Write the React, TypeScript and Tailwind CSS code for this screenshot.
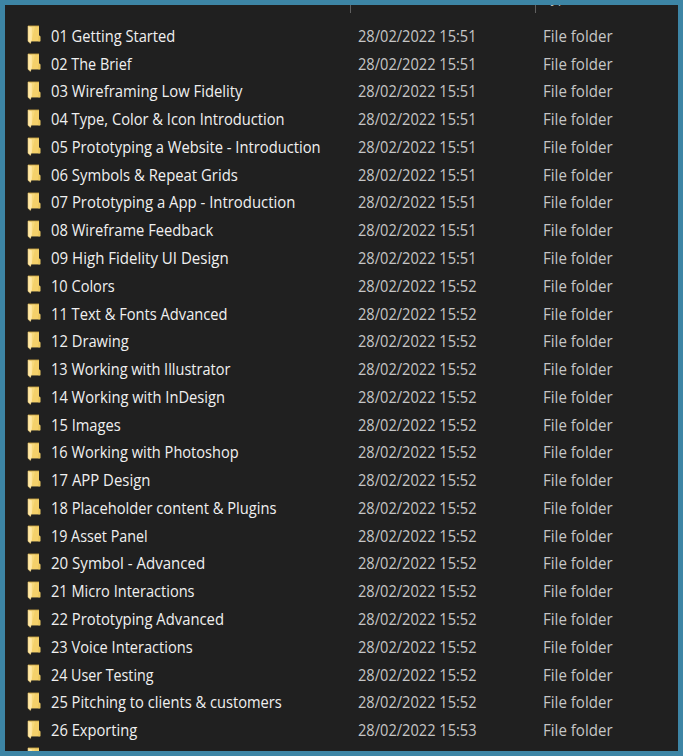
import { useLayoutEffect, useRef } from "react";

type Folder = { name: string; width: number; time: string };

const folders: Folder[] = [
  { name: "01 Getting Started", width: 124, time: "15:51" },
  { name: "02 The Brief", width: 81, time: "15:51" },
  { name: "03 Wireframing Low Fidelity", width: 191.5, time: "15:51" },
  { name: "04 Type, Color & Icon Introduction", width: 234, time: "15:51" },
  { name: "05 Prototyping a Website - Introduction", width: 270, time: "15:51" },
  { name: "06 Symbols & Repeat Grids", width: 187, time: "15:51" },
  { name: "07 Prototyping a App - Introduction", width: 244, time: "15:51" },
  { name: "08 Wireframe Feedback", width: 162.5, time: "15:51" },
  { name: "09 High Fidelity UI Design", width: 177.5, time: "15:51" },
  { name: "10 Colors", width: 64, time: "15:52" },
  { name: "11 Text & Fonts Advanced", width: 177, time: "15:52" },
  { name: "12 Drawing", width: 78, time: "15:52" },
  { name: "13 Working with Illustrator", width: 179, time: "15:52" },
  { name: "14 Working with InDesign", width: 174.3, time: "15:52" },
  { name: "15 Images", width: 70.2, time: "15:52" },
  { name: "16 Working with Photoshop", width: 187.3, time: "15:52" },
  { name: "17 APP Design", width: 99, time: "15:52" },
  { name: "18 Placeholder content & Plugins", width: 225.7, time: "15:52" },
  { name: "19 Asset Panel", width: 97, time: "15:52" },
  { name: "20 Symbol - Advanced", width: 154.3, time: "15:52" },
  { name: "21 Micro Interactions", width: 143.7, time: "15:52" },
  { name: "22 Prototyping Advanced", width: 173, time: "15:52" },
  { name: "23 Voice Interactions", width: 141.2, time: "15:52" },
  { name: "24 User Testing", width: 103, time: "15:52" },
  { name: "25 Pitching to clients & customers", width: 231, time: "15:52" },
  { name: "26 Exporting", width: 86.3, time: "15:53" },
];

// Condenses the label so that it fills exactly the given width.
function Fit({ text, width }: { text: string; width: number }) {
  const ref = useRef<HTMLSpanElement>(null);
  useLayoutEffect(() => {
    const fit = () => {
      const el = ref.current;
      if (!el) return;
      el.style.transform = `scaleX(${width / el.offsetWidth})`;
    };
    fit();
    document.fonts.ready.then(fit);
  }, [text, width]);
  return (
    <span ref={ref} className="inline-block origin-left whitespace-pre">
      {text}
    </span>
  );
}

function FolderIcon() {
  return (
    <svg width="14" height="20" viewBox="0 0 14 20" className="block shrink-0">
      <path d="M1 1H12V10.5L13.2 11.3V16.3H1Z" fill="#f8da7c" />
      <path d="M8 1H12V10.5L13.2 11.3V16.3H4.5Z" fill="#f4d06a" />
      <path d="M1 .9H12" stroke="#b9963f" strokeWidth=".8" />
      <path d="M11.6 10.8L13.2 11.5V16.3H11.2V12Z" fill="#ecc75c" />
      <path d="M1 1.3L4.8 2.6V14.6L3.7 18.5L1 16.3Z" fill="#ffe8a6" />
      <path d="M1 1V16.3L3.3 18.4L4 16.3" fill="none" stroke="#e3c472" strokeWidth=".6" />
    </svg>
  );
}

export default function App() {
  return (
    <div className="h-[756px] w-[683px] overflow-hidden border-5 border-[#3d85a5] bg-[#202020] font-['Open_Sans','Noto_Sans',sans-serif] text-[15.5px] leading-[27.78px]">
      <div className="flex h-[17.9px] overflow-hidden text-[#b8b8b8]">
        <div className="h-2 w-[345px]" />
        <div className="h-2 w-[185px] border-l border-[#606060]" />
        <div className="h-2 w-[143px] border-l border-[#606060] pl-[7px]">
          <div className="h-px overflow-hidden">
            <div className="-mt-[18px] text-[14px] leading-5">Type</div>
          </div>
        </div>
      </div>
      {folders.map((folder) => (
        <div key={folder.name} className="flex h-[27.78px]">
          <div className="w-[45.9px] pl-[22px] pt-[2.6px]">
            <FolderIcon />
          </div>
          <div className="w-[307.2px] text-[#f0f0f0]">
            <Fit text={folder.name} width={folder.width} />
          </div>
          <div className="w-[185px] text-[#c6c6c6]">
            <Fit text={`28/02/2022 ${folder.time}`} width={118.7} />
          </div>
          <div className="text-[#c6c6c6]">
            <Fit text="File folder" width={70} />
          </div>
        </div>
      ))}
      <div className="flex h-[27.78px] pl-[22px] pt-[2.6px]">
        <FolderIcon />
      </div>
    </div>
  );
}
